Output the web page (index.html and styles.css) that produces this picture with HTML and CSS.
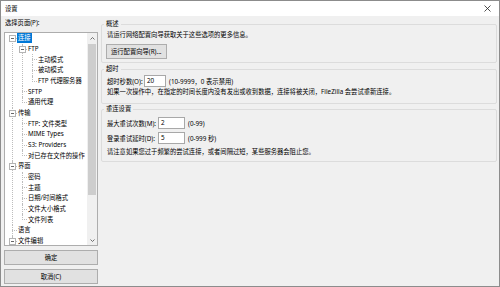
FILE: index.html
```html
<!DOCTYPE html>
<html lang="zh-CN">
<head>
    <meta charset="UTF-8" />
    <title>设置</title>
    <link rel="stylesheet" href="styles.css">
</head>
<body>
<div class="window">
    <div class="titlebar">
        <span class="title">设置</span>
        <svg class="close" width="7" height="7" viewBox="0 0 7 7">
            <line x1="0.5" y1="0.5" x2="6.5" y2="6.5" />
            <line x1="6.5" y1="0.5" x2="0.5" y2="6.5" />
        </svg>
    </div>

    <div class="main">
        <div class="sidebar">
            <div class="label">选择页面(P):</div>
            <div class="tree-box">
                <ul class="tree">
                    <li><div class="row"><span class="exp"></span><span class="node sel">连接</span></div>
                        <ul>
                            <li><div class="row"><span class="exp"></span><span class="node">FTP</span></div>
                                <ul>
                                    <li><div class="row"><span class="node">主动模式</span></div></li>
                                    <li><div class="row"><span class="node">被动模式</span></div></li>
                                    <li><div class="row"><span class="node">FTP 代理服务器</span></div></li>
                                </ul>
                            </li>
                            <li><div class="row"><span class="node">SFTP</span></div></li>
                            <li><div class="row"><span class="node">通用代理</span></div></li>
                        </ul>
                    </li>
                    <li><div class="row"><span class="exp"></span><span class="node">传输</span></div>
                        <ul>
                            <li><div class="row"><span class="node">FTP: 文件类型</span></div></li>
                            <li><div class="row"><span class="node">MIME Types</span></div></li>
                            <li><div class="row"><span class="node">S3: Providers</span></div></li>
                            <li><div class="row"><span class="node">对已存在文件的操作</span></div></li>
                        </ul>
                    </li>
                    <li><div class="row"><span class="exp"></span><span class="node">界面</span></div>
                        <ul>
                            <li><div class="row"><span class="node">密码</span></div></li>
                            <li><div class="row"><span class="node">主题</span></div></li>
                            <li><div class="row"><span class="node">日期/时间格式</span></div></li>
                            <li><div class="row"><span class="node">文件大小格式</span></div></li>
                            <li><div class="row"><span class="node">文件列表</span></div></li>
                        </ul>
                    </li>
                    <li><div class="row"><span class="node">语言</span></div></li>
                    <li class="more"><div class="row"><span class="exp"></span><span class="node">文件编辑</span></div></li>
                </ul>
                <div class="scrollbar">
                    <div class="arrow">
                        <svg width="5" height="3" viewBox="0 0 5 3"><polyline points="0.5,2.5 2.5,0.5 4.5,2.5" /></svg>
                    </div>
                    <div class="track"><div class="thumb"></div></div>
                    <div class="arrow">
                        <svg width="5" height="3" viewBox="0 0 5 3"><polyline points="0.5,0.5 2.5,2.5 4.5,0.5" /></svg>
                    </div>
                </div>
            </div>
            <button class="btn">确定</button>
            <button class="btn">取消(C)</button>
        </div>

        <div class="content">
            <fieldset class="group group-overview">
                <legend>概述</legend>
                <p class="text">请运行网络配置向导获取关于这些选项的更多信息。</p>
                <button class="wizard-btn">运行配置向导(R)...</button>
            </fieldset>

            <fieldset class="group group-timeout">
                <legend>超时</legend>
                <div class="field">
                    <span class="field-label short">超时秒数(O):</span>
                    <span class="input narrow">20</span>
                    <span class="hint">(10-9999，0 表示禁用)</span>
                </div>
                <p class="text">如果一次操作中，在指定的时间长度内没有发出或收到数据，连接将被关闭，FileZilla 会尝试重新连接。</p>
            </fieldset>

            <fieldset class="group group-reconnect">
                <legend>重连设置</legend>
                <div class="field">
                    <span class="field-label long">最大重试次数(M):</span>
                    <span class="input">2</span>
                    <span class="hint">(0-99)</span>
                </div>
                <div class="field">
                    <span class="field-label long">登录重试延时(D):</span>
                    <span class="input">5</span>
                    <span class="hint">(0-999 秒)</span>
                </div>
                <p class="text">请注意如果您过于频繁的尝试连接，或者间隔过短，某些服务器会阻止您。</p>
            </fieldset>
        </div>
    </div>
</div>
</body>
</html>
```

FILE: styles.css
```css
* {
    margin: 0;
    padding: 0;
    box-sizing: border-box;
}

body {
    font-family: "Noto Sans", "Noto Sans CJK SC", sans-serif;
    font-size: 6.3px;
    color: #000;
    background-color: #f0f0f0;
}

.window {
    width: 500px;
    height: 287px;
    border: 1px solid #8c8c8c;
    background-color: #f0f0f0;
    display: flex;
    flex-direction: column;
}

.titlebar {
    height: 15px;
    background-color: #fff;
    display: flex;
    align-items: center;
    justify-content: space-between;
    padding: 0 4px 0 4px;
    line-height: 15px;
}

.close {
    margin-right: 4px;
    stroke: #222;
    stroke-width: 0.8;
}

.main {
    flex: 1;
    display: flex;
    gap: 3px;
    padding: 0 2px 0 3px;
}

/* left column */

.sidebar {
    width: 94px;
    display: flex;
    flex-direction: column;
}

.label {
    margin-top: 2px;
    padding-left: 1px;
    line-height: 10px;
}

.tree-box {
    margin-top: 4px;
    height: 214px;
    border: 1px solid #adadad;
    background-color: #fff;
    display: flex;
    overflow: hidden;
}

.tree {
    flex: 1;
    list-style: none;
    overflow: hidden;
}

.tree ul {
    list-style: none;
    padding-left: 10px;
}

.tree li {
    position: relative;
}

.tree li::before {
    content: "";
    position: absolute;
    left: 7px;
    top: 5px;
    width: 5px;
    border-top: 1px dotted #bdbdbd;
}

.tree li::after {
    content: "";
    position: absolute;
    left: 7px;
    top: 0;
    bottom: 0;
    border-left: 1px dotted #bdbdbd;
}

.tree > li:first-child::after {
    top: 5px;
}

.tree li:last-child::after {
    bottom: auto;
    height: 6px;
}

/* list continues below the visible part */
.tree li.more::after {
    height: auto;
    bottom: 0;
}

.row {
    position: relative;
    height: 10.68px;
    padding-left: 12px;
    display: flex;
    align-items: center;
    white-space: nowrap;
}

.exp {
    position: absolute;
    left: 4px;
    top: 2px;
    width: 7px;
    height: 7px;
    border: 1px solid #b4b4b4;
    background-color: #fff;
    z-index: 1;
}

.exp::after {
    content: "";
    position: absolute;
    left: 1px;
    top: 2px;
    width: 3px;
    height: 1px;
    background-color: #666;
}

.node {
    padding: 0 1px;
    line-height: 10px;
}

.node.sel {
    background-color: #0078d7;
    color: #fff;
}

.scrollbar {
    width: 10px;
    display: flex;
    flex-direction: column;
    background-color: #f0f0f0;
}

.arrow {
    height: 10px;
    display: flex;
    align-items: center;
    justify-content: center;
}

.arrow svg {
    fill: none;
    stroke: #606060;
    stroke-width: 0.9;
}

.track {
    flex: 1;
    padding: 1px 1px 0;
}

.thumb {
    height: 151px;
    background-color: #cdcdcd;
}

.btn {
    margin-top: 4px;
    height: 15px;
    width: 100%;
    border: 1px solid #adadad;
    background-color: #e1e1e1;
    font: inherit;
    color: #000;
    line-height: 13px;
}

/* right column */

.content {
    flex: 1;
    display: flex;
    flex-direction: column;
}

.group {
    border: 1px solid #dcdcdc;
    border-radius: 2px;
    padding: 0 5px;
    min-width: 0;
}

.group legend {
    padding: 0 2px;
    margin-left: -3px;
    line-height: 10px;
}

.group-overview {
    margin-top: 3px;
    padding-top: 1px;
    padding-bottom: 3px;
}

.group-timeout {
    margin-top: 1px;
    padding-top: 1px;
    padding-bottom: 6px;
}

.group-reconnect {
    padding-top: 3px;
    padding-bottom: 4px;
}

.text {
    line-height: 10px;
    white-space: nowrap;
}

.group-reconnect .text {
    margin-top: 3px;
}

.wizard-btn {
    margin-top: 4px;
    margin-left: -1px;
    height: 15px;
    padding: 0 4px;
    border: 1px solid #adadad;
    background-color: #e1e1e1;
    font: inherit;
    color: #000;
}

.field {
    display: flex;
    align-items: center;
    height: 12px;
}

.field + .field {
    margin-top: 3px;
}

.field-label.short {
    width: 37px;
}

.field-label.long {
    width: 51px;
}

.input {
    width: 27px;
    height: 12px;
    border: 1px solid #a8a8a8;
    background-color: #fff;
    padding-left: 2px;
    line-height: 10px;
}

.input.narrow {
    width: 22px;
}

.hint {
    margin-left: 3px;
}
```
